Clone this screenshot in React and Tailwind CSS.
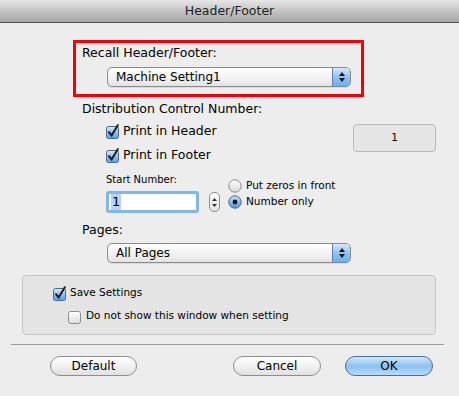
import React from 'react'

const FONT = { fontFamily: '"DejaVu Sans", "Liberation Sans", sans-serif' }

function CheckBox({ checked }) {
  return (
    <svg width="15" height="15" viewBox="0 0 15 15" className="shrink-0">
      <defs>
        <linearGradient id="cbOn" x1="0" y1="0" x2="0" y2="1">
          <stop offset="0" stopColor="#d9ecfd" />
          <stop offset="0.5" stopColor="#8ec0f3" />
          <stop offset="1" stopColor="#5aa0e8" />
        </linearGradient>
        <linearGradient id="cbOff" x1="0" y1="0" x2="0" y2="1">
          <stop offset="0" stopColor="#ffffff" />
          <stop offset="1" stopColor="#dcdcdc" />
        </linearGradient>
      </defs>
      <rect x="1.5" y="2.5" width="12" height="12" rx="2" fill={checked ? 'url(#cbOn)' : 'url(#cbOff)'} stroke={checked ? '#456a9a' : '#8e8e8e'} />
      {checked && (
        <path d="M4 8.2 L6.6 11.6 L12.8 1.2" fill="none" stroke="#1c1c1c" strokeWidth="2" strokeLinecap="round" strokeLinejoin="round" />
      )}
    </svg>
  )
}

function Radio({ checked }) {
  return (
    <svg width="14" height="14" viewBox="0 0 14 14" className="shrink-0">
      <defs>
        <linearGradient id="rOn" x1="0" y1="0" x2="0" y2="1">
          <stop offset="0" stopColor="#cfe5fc" />
          <stop offset="1" stopColor="#4b95e4" />
        </linearGradient>
        <linearGradient id="rOff" x1="0" y1="0" x2="0" y2="1">
          <stop offset="0" stopColor="#ffffff" />
          <stop offset="1" stopColor="#d8d8d8" />
        </linearGradient>
      </defs>
      <circle cx="7" cy="7" r="6.2" fill={checked ? 'url(#rOn)' : 'url(#rOff)'} stroke={checked ? '#3f6796' : '#8a8a8a'} />
      {checked && <circle cx="7" cy="7" r="2.4" fill="#1a1a1a" />}
    </svg>
  )
}

function PopUp({ label, className }) {
  return (
    <div className={`flex h-[20px] rounded-[5px] border border-[#8b8b8b] bg-gradient-to-b from-white via-[#f3f3f3] to-[#e3e3e3] overflow-hidden shadow-[0_1px_0_rgba(0,0,0,0.08)] ${className}`}>
      <div className="flex-1 flex items-center pl-[8px] text-[12px] text-black">{label}</div>
      <div className="w-[18px] h-full flex flex-col items-center justify-center gap-[2px] border-l border-[#5a7fb4] bg-gradient-to-b from-[#d5e8fc] via-[#93c2f4] to-[#6eaaf0]">
        <svg width="6" height="4" viewBox="0 0 6 4"><path d="M3 0 L6 4 L0 4 Z" fill="#111" /></svg>
        <svg width="6" height="4" viewBox="0 0 6 4"><path d="M0 0 L6 0 L3 4 Z" fill="#111" /></svg>
      </div>
    </div>
  )
}

function Button({ label, primary, className }) {
  const skin = primary
    ? 'border-[#4b6c9c] bg-gradient-to-b from-[#d3e7fb] via-[#8cc0f2] to-[#b9dcfb]'
    : 'border-[#8d8d8d] bg-gradient-to-b from-white via-[#f1f1f1] to-[#e0e0e0]'
  return (
    <div className={`h-[20px] rounded-full border flex items-center justify-center text-[12px] text-black ${skin} ${className}`}>
      {label}
    </div>
  )
}

export default function App() {
  return (
    <div className="w-[459px] h-[396px] bg-[#ededed] flex flex-col text-black" style={FONT}>
      {/* Title bar */}
      <div className="h-[23px] shrink-0 border-b border-[#555] bg-gradient-to-b from-[#e6e6e6] via-[#c4c4c4] to-[#a6a6a6] flex items-center justify-center text-[12.5px] text-[#1e1e1e]">
        Header/Footer
      </div>

      {/* Recall box */}
      <div className="ml-[73px] mt-[17px] w-[291px] h-[57px] border-[3px] border-[#f00000] flex flex-col">
        <div className="h-[18px] mt-[1px] pl-[6px] flex items-center text-[12.5px]">Recall Header/Footer:</div>
        <PopUp label="Machine Setting1" className="mt-[5px] ml-[31px] w-[244px]" />
      </div>

      <div className="h-[18px] mt-[3px] ml-[82px] flex items-center text-[12.5px]">Distribution Control Number:</div>

      <div className="flex mt-[1px]">
        <div className="flex flex-col ml-[105px]">
          <div className="h-[24px] flex items-center gap-[3px] text-[12.5px]"><CheckBox checked />Print in Header</div>
          <div className="h-[24px] flex items-center gap-[3px] text-[12.5px]"><CheckBox checked />Print in Footer</div>
        </div>
        <div className="ml-auto mr-[23px] mt-[5px] w-[83px] h-[28px] rounded-[4px] border border-[#b9b9b9] bg-[#e5e5e5] flex items-center justify-center text-[10.5px]">
          1
        </div>
      </div>

      <div className="flex">
        <div className="flex flex-col ml-[106px]">
          <div className="h-[18px] mt-[3px] flex items-center text-[10px]">Start Number:</div>
          <div className="flex mt-[3px]">
            <div className="w-[93px] h-[22px] rounded-[3px] border-[3px] border-[#86b4e3] bg-white flex items-center pl-[2px]">
              <span className="bg-[#b4d3f6] px-[1px] text-[13px] leading-[16px]">1</span>
            </div>
            <div className="ml-[10px] mt-[1px] w-[11px] h-[20px] rounded-[5px] border border-[#8e8e8e] bg-gradient-to-b from-white to-[#e2e2e2] flex flex-col items-center justify-center gap-[3px]">
              <svg width="5" height="3" viewBox="0 0 5 3"><path d="M2.5 0 L5 3 L0 3 Z" fill="#333" /></svg>
              <svg width="5" height="3" viewBox="0 0 5 3"><path d="M0 0 L5 0 L2.5 3 Z" fill="#333" /></svg>
            </div>
          </div>
        </div>
        <div className="flex flex-col ml-[8px] mt-[11px]">
          <div className="h-[16px] flex items-center gap-[4px] text-[10.5px]"><Radio />Put zeros in front</div>
          <div className="h-[16px] flex items-center gap-[4px] text-[10.5px]"><Radio checked />Number only</div>
        </div>
      </div>

      <div className="h-[18px] mt-[8px] ml-[82px] flex items-center text-[12.5px]">Pages:</div>
      <PopUp label="All Pages" className="mt-[4px] ml-[107px] w-[244px]" />

      {/* Settings group */}
      <div className="mt-[12px] ml-[22px] w-[414px] h-[60px] rounded-[4px] border border-[#c6c6c6] bg-[#e4e4e4] flex flex-col">
        <div className="h-[18px] mt-[8px] ml-[29px] flex items-center gap-[3px] text-[10.5px]"><CheckBox checked />Save Settings</div>
        <div className="h-[18px] mt-[5px] ml-[44px] flex items-center gap-[4px] text-[10.5px]"><CheckBox />Do not show this window when setting</div>
      </div>

      <div className="mt-[9px] ml-[11px] w-[433px] h-px bg-[#9c9c9c]" />

      <div className="flex mt-[11px]">
        <Button label="Default" className="ml-[50px] w-[87px]" />
        <Button label="Cancel" className="ml-[96px] w-[88px]" />
        <Button label="OK" primary className="ml-[24px] w-[88px]" />
      </div>
    </div>
  )
}
